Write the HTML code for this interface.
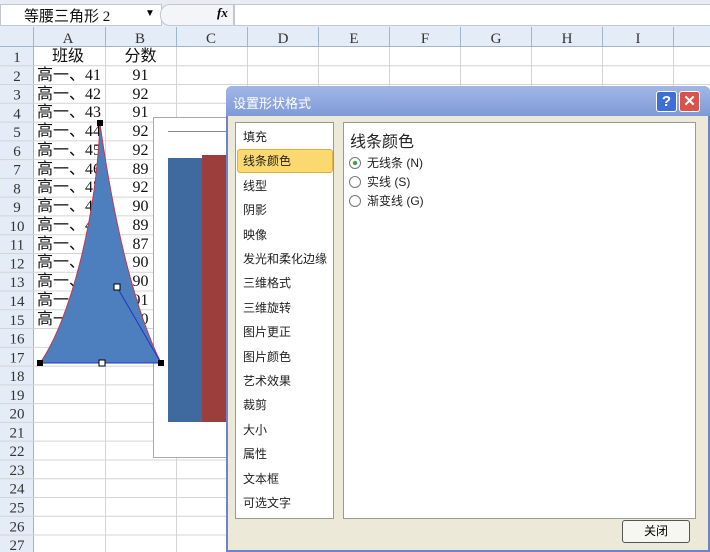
<!DOCTYPE html>
<html><head><meta charset="utf-8"><style>
body{margin:0;width:710px;height:552px;overflow:hidden;background:#fff;font-family:"Liberation Serif","Noto Serif CJK SC",serif;position:relative}
.a{position:absolute}
.cjk{font-family:"Liberation Sans","Noto Sans CJK SC",sans-serif}
.cs{font-family:"Liberation Serif","Noto Sans CJK SC",serif}
</style></head><body>
<div class="a" style="left:0;top:0;width:710px;height:27px;background:#e9edf3;border-bottom:1px solid #c5cfdc"></div>
<div class="a" style="left:0;top:4px;width:160px;height:20px;background:#fff;border:1px solid #c0c8d4"></div>
<div class="a cs" style="left:24px;top:5px;font-size:15px;color:#111">等腰三角形 2</div>
<div class="a" style="left:145px;top:8px;font-size:10px">▼</div>
<div class="a" style="left:160px;top:4px;width:72px;height:20px;background:#f3f5f8;border:1px solid #c0c8d4;border-radius:10px 0 0 10px"></div>
<div class="a" style="left:217px;top:5px;font-size:13px;font-style:italic;font-weight:bold">fx</div>
<div class="a" style="left:234px;top:4px;width:476px;height:20px;background:#fff;border:1px solid #c0c8d4"></div>
<svg class="a" style="left:0;top:27px" width="710" height="525">
<rect x="0" y="0" width="710" height="20" fill="#e4ecf7"/>
<rect x="0" y="0" width="33" height="525" fill="#e4ecf7"/>
<g stroke="#d4d4d4" stroke-width="1">
<line x1="105.5" y1="20" x2="105.5" y2="525"/><line x1="176.5" y1="20" x2="176.5" y2="525"/><line x1="247.5" y1="20" x2="247.5" y2="525"/><line x1="318.5" y1="20" x2="318.5" y2="525"/><line x1="389.5" y1="20" x2="389.5" y2="525"/><line x1="460.5" y1="20" x2="460.5" y2="525"/><line x1="531.5" y1="20" x2="531.5" y2="525"/><line x1="602.5" y1="20" x2="602.5" y2="525"/><line x1="673.5" y1="20" x2="673.5" y2="525"/>
</g>
<g stroke="#9eb6ce"><line x1="33.5" y1="0" x2="33.5" y2="525"/><line x1="0" y1="19.5" x2="710" y2="19.5"/>
<line x1="105.5" y1="0" x2="105.5" y2="20"/><line x1="176.5" y1="0" x2="176.5" y2="20"/><line x1="247.5" y1="0" x2="247.5" y2="20"/><line x1="318.5" y1="0" x2="318.5" y2="20"/><line x1="389.5" y1="0" x2="389.5" y2="20"/><line x1="460.5" y1="0" x2="460.5" y2="20"/><line x1="531.5" y1="0" x2="531.5" y2="20"/><line x1="602.5" y1="0" x2="602.5" y2="20"/><line x1="673.5" y1="0" x2="673.5" y2="20"/></g>
<g font-family="Liberation Serif" font-size="15" fill="#333" text-anchor="middle">
<text x="68" y="16">A</text><text x="140" y="16">B</text><text x="211" y="16">C</text><text x="283" y="16">D</text><text x="354" y="16">E</text><text x="425" y="16">F</text><text x="496" y="16">G</text><text x="567" y="16">H</text><text x="638" y="16">I</text>
</g>
<g id="rows" font-family="Liberation Serif" font-size="15" fill="#333" text-anchor="middle"></g>
</svg>
<div id="cells"></div>
<div class="a" style="left:153px;top:117px;width:80px;height:339px;background:#fff;border:1px solid #aaa"></div>
<div class="a" style="left:168px;top:131px;width:60px;height:1px;background:#888"></div>
<div class="a" style="left:168px;top:158px;width:34px;height:264px;background:#3e6aa0"></div>
<div class="a" style="left:202px;top:155px;width:26px;height:267px;background:#9c3f3c"></div>
<svg class="a" style="left:0;top:0" width="230" height="400">
<path d="M100,124 C96,220 70,320 40,363 L161,363 C140,320 118,250 100,124 Z" fill="#4d7fbe" stroke="#c0394b" stroke-width="1"/>
<line x1="117" y1="287" x2="161" y2="363" stroke="#2233cc"/>
<line x1="40" y1="363" x2="161" y2="363" stroke="#2233cc"/>
<rect x="97" y="120" width="6" height="6" fill="#000"/>
<rect x="37" y="360" width="6" height="6" fill="#000"/>
<rect x="158" y="360" width="6" height="6" fill="#000"/>
<rect x="99" y="360" width="6" height="6" fill="#fff" stroke="#000"/>
<rect x="114" y="284" width="6" height="6" fill="#fff" stroke="#000"/>
</svg>
<div class="a" style="left:226px;top:86px;width:484px;height:466px;background:#ece9d8;border:2px solid #6f83c9;box-sizing:border-box;border-radius:6px 6px 0 0"></div>
<div class="a" style="left:226px;top:86px;width:484px;height:30px;background:linear-gradient(#a2b7e6,#7f9ad8);border-radius:6px 6px 0 0"></div>
<div class="a cjk" style="left:233px;top:93px;font-size:13px;color:#fff">设置形状格式</div>
<div class="a" style="left:656px;top:91px;width:19px;height:19px;background:#3e6fd8;border:1px solid #fff;border-radius:3px;color:#fff;font:bold 15px 'Liberation Sans';text-align:center;line-height:19px">?</div>
<div class="a" style="left:679px;top:91px;width:19px;height:19px;background:#d9534a;border:1px solid #fff;border-radius:3px;color:#fff;font:bold 15px 'Liberation Sans';text-align:center;line-height:19px">✕</div>
<div class="a" style="left:235px;top:122px;width:97px;height:395px;background:#fff;border:1px solid #999"></div>
<div class="a" style="left:237px;top:149px;width:94px;height:22px;background:#fcd96e;border:1px solid #e0b040;border-radius:3px"></div>
<div class="a cjk" style="left:243px;top:125px;font-size:12px;line-height:24.4px;color:#222">填充<br>线条颜色<br>线型<br>阴影<br>映像<br>发光和柔化边缘<br>三维格式<br>三维旋转<br>图片更正<br>图片颜色<br>艺术效果<br>裁剪<br>大小<br>属性<br>文本框<br>可选文字</div>
<div class="a" style="left:343px;top:122px;width:351px;height:395px;background:#fff;border:1px solid #999"></div>
<div class="a cjk" style="left:350px;top:128px;font-size:16px;color:#222">线条颜色</div>
<div class="a cjk" style="left:349px;top:154px;font-size:12px;line-height:19px;color:#222">
<div><span style="display:inline-block;width:10px;height:10px;border:1px solid #777;border-radius:50%;vertical-align:-2px;margin-right:6px;background:radial-gradient(#3a3 25%,#fff 35%)"></span>无线条 (N)</div>
<div><span style="display:inline-block;width:10px;height:10px;border:1px solid #777;border-radius:50%;vertical-align:-2px;margin-right:6px"></span>实线 (S)</div>
<div><span style="display:inline-block;width:10px;height:10px;border:1px solid #777;border-radius:50%;vertical-align:-2px;margin-right:6px"></span>渐变线 (G)</div>
</div>
<div class="a cjk" style="left:622px;top:520px;width:66px;height:21px;border:1px solid #555;border-radius:3px;background:#f6f6f2;font-size:12px;text-align:center;line-height:21px">关闭</div>
<script>
var g=document.getElementById('rows'),s='';
for(var n=1;n<=27;n++){var y=20+(n-1)*18.77;s+='<line x1="0" y1="'+(y+18.77)+'" x2="710" y2="'+(y+18.77)+'" stroke="#d4d4d4"/><text x="17" y="'+(y+15)+'">'+n+'</text>';}
g.innerHTML=s;
var A=['班级','高一、41','高一、42','高一、43','高一、44','高一、45','高一、46','高一、47','高一、48','高一、49','高一、50','高一、51','高一、52','高一、53','高一、54'];
var B=['分数','91','92','91','92','92','89','92','90','89','87','90','90','91','90'];
var h='';
for(var i=0;i<15;i++){var t=47+i*18.77;
h+='<div class="a cs" style="left:'+(i==0?52:37)+'px;top:'+t+'px;font-size:16px;line-height:19px;color:#111">'+A[i]+'</div>';
h+='<div class="a cs" style="left:105px;width:71px;text-align:center;top:'+t+'px;font-size:16px;line-height:19px;color:#111">'+B[i]+'</div>';}
document.getElementById('cells').innerHTML=h;
</script>
</body></html>
